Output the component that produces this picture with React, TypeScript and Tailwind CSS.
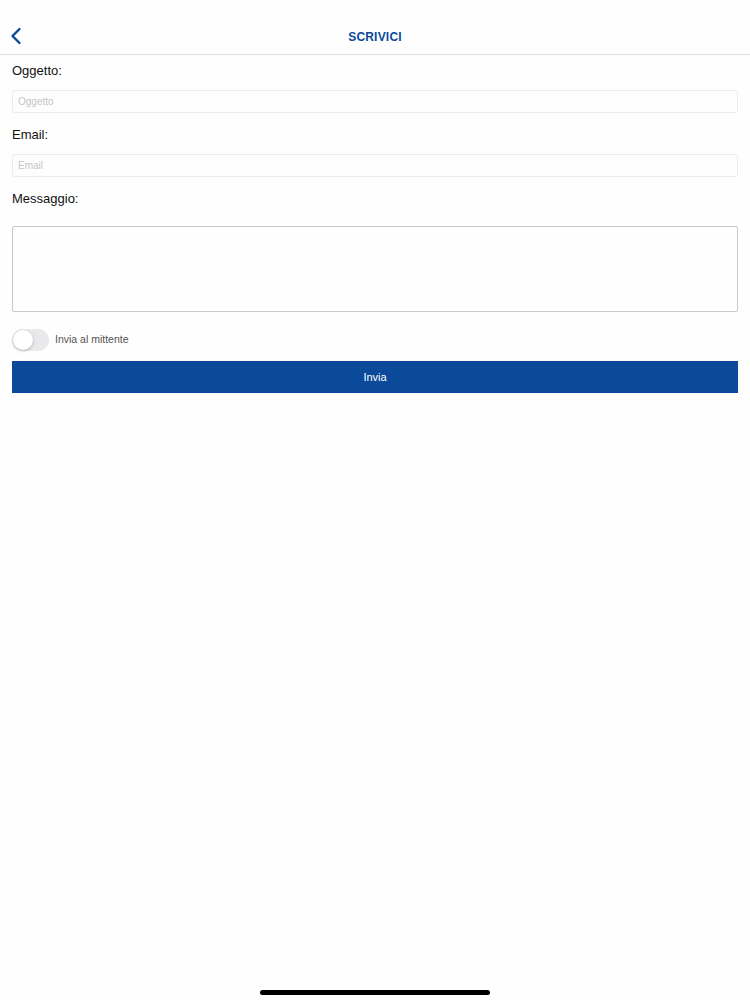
import { useState } from "react";

const FONT = { fontFamily: '"Liberation Sans", Arial, sans-serif' };

export default function App() {
  const [oggetto, setOggetto] = useState("");
  const [email, setEmail] = useState("");
  const [messaggio, setMessaggio] = useState("");
  const [inviaMittente, setInviaMittente] = useState(false);

  return (
    <div className="relative flex h-[1000px] w-[750px] flex-col bg-[#fefefe]" style={FONT}>
      {/* header */}
      <div className="relative flex h-[55px] items-end justify-center border-b border-[#dcdcdc] pb-[8px]">
        <button className="absolute left-[8px] top-[25px] p-[2px]">
          <svg width="12" height="18" viewBox="0 0 12 18" fill="none">
            <path d="M9.5 2 L2.5 9 L9.5 16" stroke="#0b4a9b" strokeWidth="2.4" strokeLinecap="round" strokeLinejoin="round" />
          </svg>
        </button>
        <h1 className="text-[12px] font-bold tracking-[0.2px] text-[#0b4a9b]">SCRIVICI</h1>
      </div>

      {/* form */}
      <div className="flex flex-col px-[12px]">
        <label className="mt-[7px] text-[13px] leading-[17px] text-[#111]">Oggetto:</label>
        <input
          value={oggetto}
          onChange={(e) => setOggetto(e.target.value)}
          placeholder="Oggetto"
          className="mt-[11px] h-[23px] w-full rounded-[3px] border border-[#ececec] bg-[#fefefe] px-[5px] text-[10px] outline-none placeholder:text-[#c4c4c8]"
        />

        <label className="mt-[13px] text-[13px] leading-[17px] text-[#111]">Email:</label>
        <input
          value={email}
          onChange={(e) => setEmail(e.target.value)}
          placeholder="Email"
          className="mt-[11px] h-[23px] w-full rounded-[3px] border border-[#ececec] bg-[#fefefe] px-[5px] text-[10px] outline-none placeholder:text-[#c4c4c8]"
        />

        <label className="mt-[13px] text-[13px] leading-[17px] text-[#111]">Messaggio:</label>
        <textarea
          value={messaggio}
          onChange={(e) => setMessaggio(e.target.value)}
          className="mt-[19px] h-[86px] w-full resize-none rounded-[2px] border border-[#c9c9c9] bg-[#fefefe] p-[5px] text-[12px] outline-none"
        />

        <div className="mt-[17px] flex items-center gap-[6px]">
          <button
            onClick={() => setInviaMittente(!inviaMittente)}
            className={
              "relative h-[22px] w-[37px] rounded-full " + (inviaMittente ? "bg-[#0b4a9b]" : "bg-[#e9e9eb]")
            }
          >
            <span
              className={
                "absolute top-[1px] h-[20px] w-[20px] rounded-full bg-white shadow-[0_1px_3px_rgba(0,0,0,0.25)] " +
                (inviaMittente ? "left-[16px]" : "left-[1px]")
              }
            />
          </button>
          <span className="text-[10.5px] text-[#555]">Invia al mittente</span>
        </div>

        <button className="mt-[10px] h-[32px] w-full bg-[#0b4a9b] text-[11px] text-white">Invia</button>
      </div>

      {/* home indicator */}
      <div className="absolute bottom-[5px] left-[260px] h-[5px] w-[230px] rounded-full bg-black" />
    </div>
  );
}
